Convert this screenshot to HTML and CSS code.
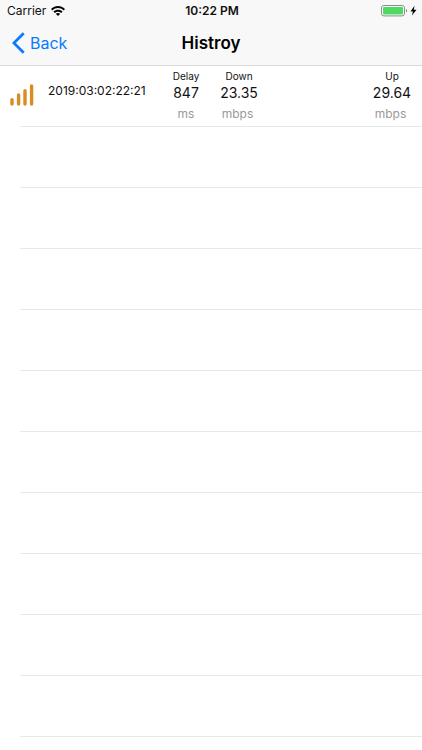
FILE: index.html
```html
<!DOCTYPE html>
<html lang="en">
<head>
<meta charset="utf-8">
<meta name="viewport" content="width=device-width, initial-scale=1">
<title>Histroy</title>
<link rel="stylesheet" href="styles.css">
</head>
<body>
<header class="header">
  <div class="status">
    <div class="status-side">
      <span>Carrier</span>
      <svg class="wifi" width="14" height="10" viewBox="0 0 14 10" aria-hidden="true">
        <path d="M0 3.1C4-.9 10-.9 14 3.1L12.6 4.5C9.3 1.3 4.7 1.3 1.4 4.5Z"/>
        <path d="M2.4 5.5C5 3 9 3 11.6 5.5L10.2 6.9C8.4 5.2 5.6 5.2 3.8 6.9Z"/>
        <path d="M4.8 7.8Q7 6 9.2 7.8L7 10Z"/>
      </svg>
    </div>
    <time class="clock">10:22 PM</time>
    <div class="status-side status-end">
      <svg width="36" height="12" viewBox="0 0 36 12" aria-hidden="true">
        <rect x=".5" y=".5" width="23" height="10.4" rx="2.4" fill="#fff" stroke="#8b8b8b"/>
        <rect x="2" y="2" width="20" height="7.4" rx="1" fill="#4cd964"/>
        <path d="M25 4C26.5 4.300 26.500 7.100 25 7.400Z" fill="#8b8b8b"/>
        <path d="M33.500 .8L29.500 6.400H32L30.900 10.500L35.500 4.700H32.800Z"/>
      </svg>
    </div>
  </div>
  <nav class="nav">
    <button class="back" type="button">
      <svg width="13" height="22" viewBox="0 0 13 22" aria-hidden="true"><path d="M11.700 1.200L1.900 11L11.700 20.800" fill="none" stroke="#087cfc" stroke-width="2.800"/></svg>
      <span>Back</span>
    </button>
    <h1 class="title">Histroy</h1>
  </nav>
</header>
<main>
  <ul class="list">
    <li class="row">
      <svg class="signal" width="24" height="22" viewBox="0 0 24 22" aria-hidden="true">
        <path d="M2 15.700V20M8.600 11V20M15 6.700V20M21.600 2V20" fill="none" stroke="#d78d22" stroke-width="3.400" stroke-linecap="round"/>
      </svg>
      <time class="date">2019:03:02:22:21</time>
      <div class="metric"><span class="label">Delay</span><span class="value">847</span><span class="unit">ms</span></div>
      <div class="metric"><span class="label">Down</span><span class="value">23.35</span><span class="unit unit-rate">mbps</span></div>
      <div class="metric metric-end"><span class="label">Up</span><span class="value">29.64</span><span class="unit unit-rate">mbps</span></div>
    </li>
    <li class="row"></li>
    <li class="row"></li>
    <li class="row"></li>
    <li class="row"></li>
    <li class="row"></li>
    <li class="row"></li>
    <li class="row"></li>
    <li class="row"></li>
    <li class="row"></li>
    <li class="row"></li>
  </ul>
</main>
</body>
</html>
```
FILE: styles.css
```css
* {
  box-sizing: border-box;
}

body {
  margin: 0;
  background: #fff;
  color: #111;
  font-family: Inter, "Liberation Sans", sans-serif;
}

.header {
  background: #f8f8f8;
  border-bottom: 1px solid #dadada;
}

.status {
  display: grid;
  grid-template-columns: 1fr auto 1fr;
  align-items: center;
  height: 21px;
  padding: 0 5px 0 7px;
  font-size: 12px;
}

.status-side {
  display: flex;
  align-items: center;
  gap: 5px;
}

.status-end {
  justify-content: flex-end;
}

.clock {
  font-weight: 600;
}

.nav {
  display: grid;
  grid-template-columns: 1fr auto 1fr;
  align-items: center;
  height: 44px;
  padding: 0 12px;
}

.back {
  display: flex;
  align-items: center;
  justify-self: start;
  gap: 5px;
  padding: 0;
  border: 0;
  background: none;
  color: #087cfc;
  font-family: inherit;
  font-size: 16px;
  line-height: 22px;
  cursor: pointer;
}

.title {
  margin: 0;
  color: #000;
  font-size: 17px;
  font-weight: 600;
  line-height: 22px;
}

.list {
  margin: 0;
  padding: 0;
  list-style: none;
}

.row {
  display: flex;
  height: 61px;
  padding: 4px 10px 0;
  background: linear-gradient(#e8e8e8, #e8e8e8) 20px 100% / 100% 1px no-repeat;
}

.signal {
  flex: none;
  margin-top: 14px;
}

.date {
  width: 118px;
  padding-left: 14px;
  font-size: 12px;
  line-height: 42px;
}

.metric {
  display: flex;
  flex-direction: column;
  align-items: center;
  width: 40px;
  margin-left: 13px;
}

.date + .metric {
  margin-left: 14px;
}

.metric.metric-end {
  margin-left: auto;
}

.label {
  font-size: 10px;
  line-height: 12px;
}

.value {
  font-size: 14px;
  line-height: 22px;
}

.unit {
  color: #999;
  font-size: 12px;
  line-height: 20px;
}

.unit-rate {
  padding-right: 3px;
}
```
